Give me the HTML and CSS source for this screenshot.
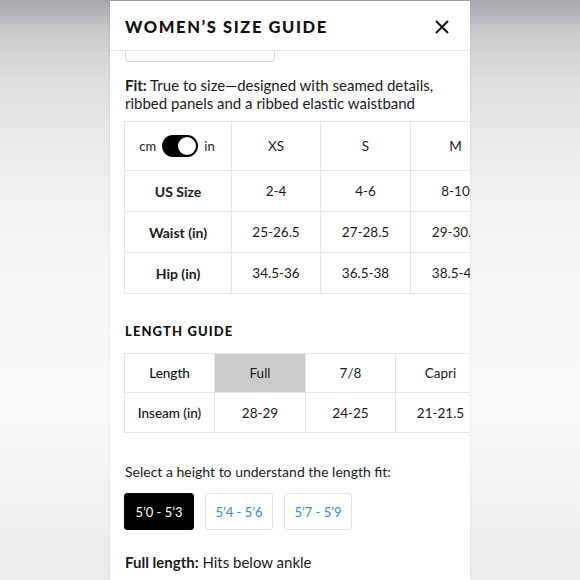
FILE: index.html
```html
<!DOCTYPE html>
<html lang="en">
<head>
<meta charset="utf-8">
<title>Women's Size Guide</title>
<link rel="stylesheet" href="styles.css">
</head>
<body>
<div class="stage">
  <div class="panel">
    <header class="head">
      <h1 class="title">WOMEN’S SIZE GUIDE</h1>
      <button class="close" aria-label="Close">
        <svg width="14" height="14" viewBox="0 0 14 14"><path d="M1 1 L13 13 M13 1 L1 13" stroke="#111" stroke-width="2" fill="none"/></svg>
      </button>
    </header>
    <div class="body">
      <div class="stub"></div>
      <p class="fit"><b>Fit:</b> True to size—designed with seamed details, ribbed panels and a ribbed elastic waistband</p>

      <div class="grid size-grid">
        <div class="cell unit">
          <span>cm</span>
          <span class="toggle"><span class="knob"></span></span>
          <span>in</span>
        </div>
        <div class="cell">XS</div>
        <div class="cell">S</div>
        <div class="cell">M</div>

        <div class="cell label">US Size</div>
        <div class="cell">2-4</div>
        <div class="cell">4-6</div>
        <div class="cell">8-10</div>

        <div class="cell label">Waist (in)</div>
        <div class="cell">25-26.5</div>
        <div class="cell">27-28.5</div>
        <div class="cell">29-30.5</div>

        <div class="cell label">Hip (in)</div>
        <div class="cell">34.5-36</div>
        <div class="cell">36.5-38</div>
        <div class="cell">38.5-40</div>
      </div>

      <h2 class="section">LENGTH GUIDE</h2>

      <div class="grid length-grid">
        <div class="cell mid">Length</div>
        <div class="cell active">Full</div>
        <div class="cell">7/8</div>
        <div class="cell">Capri</div>

        <div class="cell mid">Inseam (in)</div>
        <div class="cell">28-29</div>
        <div class="cell">24-25</div>
        <div class="cell">21-21.5</div>
      </div>

      <p class="select">Select a height to understand the length fit:</p>

      <div class="heights">
        <button class="hbtn on">5’0 - 5’3</button>
        <button class="hbtn">5’4 - 5’6</button>
        <button class="hbtn">5’7 - 5’9</button>
      </div>

      <p class="result"><b>Full length:</b> Hits below ankle</p>
    </div>
  </div>
</div>
</body>
</html>
```

FILE: styles.css
```css
* { box-sizing: border-box; }

html, body {
  margin: 0;
  padding: 0;
  height: 580px;
  overflow: hidden;
}

body {
  font-family: "Lato", "Liberation Sans", sans-serif;
  color: #111;
  background: linear-gradient(to bottom, #a8a8ac 0px, #c9c9cc 30px, #dedee0 80px, #eeeeee 170px, #f7f7f7 300px, #f8f8f8 420px, #efefef 520px, #ececec 580px);
}

.stage {
  display: flex;
  padding-left: 110px;
  height: 580px;
}

.panel {
  width: 360px;
  height: 580px;
  background: #fff;
  overflow: hidden;
  box-shadow: 0 0 2px rgba(0,0,0,0.12);
  border-top: 1px solid #9d9d9f;
}

.head {
  height: 50px;
  border-bottom: 1px solid #e6e6e6;
  display: flex;
  align-items: center;
  justify-content: space-between;
  padding: 2px 21px 0 15px;
}

.title {
  margin: 0;
  font-size: 16.5px;
  font-weight: 900;
  letter-spacing: 1.6px;
  color: #111;
}

.close {
  border: 0;
  background: none;
  padding: 0;
  width: 14px;
  height: 14px;
  display: flex;
}

.body {
  padding-left: 14px;
}

.stub {
  width: 150px;
  height: 11px;
  margin-left: 1px;
  border: 1px solid #d9d9d9;
  border-top: 0;
  border-radius: 0 0 4px 4px;
}

.fit {
  margin: 14px 0 0 1px;
  font-size: 15px;
  line-height: 18px;
  color: #1a1a1a;
  padding-right: 20px;
}

.fit b, .result b { font-weight: 700; }

.grid {
  display: grid;
  width: max-content;
  border-top: 1px solid #e6e6e6;
  border-left: 1px solid #e6e6e6;
  font-size: 13.5px;
  color: #1a1a1a;
}

.cell {
  border-right: 1px solid #e6e6e6;
  border-bottom: 1px solid #e6e6e6;
  display: flex;
  align-items: center;
  justify-content: center;
  white-space: nowrap;
}

.size-grid {
  margin-top: 9px;
  grid-template-columns: 107px 89px 90px 90px;
  grid-template-rows: 49px 41px 41px 41px;
}

.label { font-weight: 700; font-size: 14px; }

.mid { font-weight: 500; color: #111; }

.unit {
  gap: 6px;
  font-size: 13px;
  padding-right: 2px;
}

.toggle {
  width: 36px;
  height: 22px;
  border-radius: 11px;
  background: #000;
  display: flex;
  justify-content: flex-end;
  align-items: center;
  padding: 2px;
}

.knob {
  width: 18px;
  height: 18px;
  border-radius: 50%;
  background: #fff;
}

.section {
  margin: 29px 0 0 1px;
  font-size: 13px;
  line-height: 16px;
  font-weight: 900;
  letter-spacing: 1.1px;
}

.length-grid {
  margin-top: 14px;
  grid-template-columns: 90px 91px 90px 90px;
  grid-template-rows: 39px 40px;
}

.active { background: #cbcbcb; }

.select {
  margin: 30px 0 0 1px;
  font-size: 14px;
  line-height: 18px;
  color: #1a1a1a;
}

.heights {
  margin-top: 12px;
  display: flex;
  gap: 11px;
}

.hbtn {
  height: 37px;
  width: 68px;
  border: 1px solid #e2e2e2;
  border-radius: 3px;
  background: #fff;
  color: #3b87d4;
  font-family: inherit;
  font-size: 13px;
  padding: 0;
}

.hbtn.on {
  width: 70px;
  background: #000;
  border-color: #000;
  color: #fff;
}

.result {
  margin: 22px 0 0 1px;
  font-size: 15px;
  line-height: 20px;
  color: #1a1a1a;
}
```
